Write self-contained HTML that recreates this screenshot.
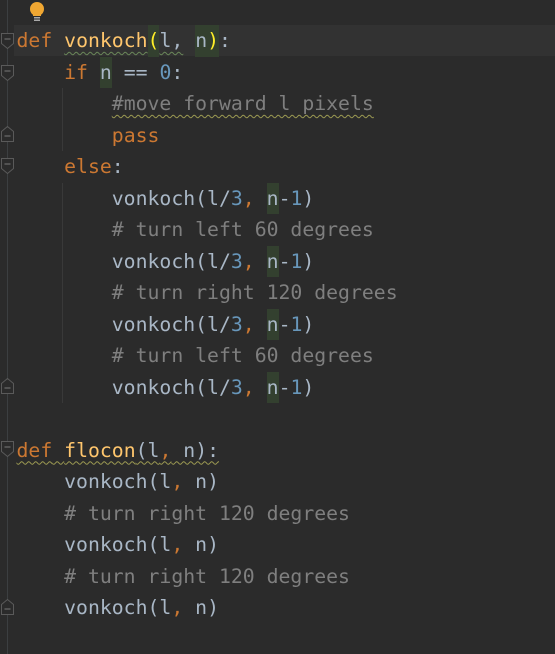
<!DOCTYPE html>
<html><head><meta charset="utf-8"><style>
html,body{margin:0;padding:0;}
body{width:555px;height:654px;background:#2b2b2b;position:relative;overflow:hidden;font-family:"DejaVu Sans Mono","Liberation Mono",monospace;font-size:19.8px;}
.cur{position:absolute;left:14px;top:25px;width:541px;height:31px;background:#323232;}
.gut{position:absolute;left:7px;top:0;width:1px;height:654px;background:#3c3f41;}
.l{position:absolute;left:16.5px;height:31.5px;line-height:31.5px;white-space:pre;color:#a9b7c6;}
.k{color:#cc7832}.f{color:#ffc66d}.n{color:#6897bb}.c{color:#7f7f7f}
.h{background:#33402f;display:inline-block;height:31.5px}
.g{position:absolute;width:1px;background:#393939;}
.w1{text-decoration:underline wavy #6a8759;text-decoration-thickness:1px;text-underline-offset:4px}
.w2{text-decoration:underline wavy #9c9a52;text-decoration-thickness:1px;text-underline-offset:4px}
.fm{position:absolute;left:0px;}
</style></head><body>
<div class="cur"></div>
<div class="gut"></div>
<div class="g" style="left:62px;top:88px;height:63px"></div>
<div class="g" style="left:62px;top:183px;height:220px"></div>
<svg style="position:absolute;left:28px;top:1px" width="18" height="22" viewBox="0 0 18 22"><circle cx="9" cy="8" r="7" fill="#f0a732"/><rect x="5" y="12" width="8" height="3" fill="#f0a732"/><rect x="6" y="16" width="6" height="1.5" fill="#aaa"/><rect x="6" y="18.5" width="6" height="1.5" fill="#aaa"/></svg>
<svg class="fm" style="top:32px" width="16" height="18"><path d="M1.5 1.5h12v10l-6 5l-6-5z" fill="#2b2b2b" stroke="#5a5a5a"/><path d="M4.5 7h6" stroke="#7a7a7a"/></svg>
<svg class="fm" style="top:64px" width="16" height="18"><path d="M1.5 1.5h12v10l-6 5l-6-5z" fill="#2b2b2b" stroke="#5a5a5a"/><path d="M4.5 7h6" stroke="#7a7a7a"/></svg>
<svg class="fm" style="top:125px" width="16" height="18"><path d="M1.5 16.5h12v-10l-6-5l-6 5z" fill="#2b2b2b" stroke="#5a5a5a"/><path d="M4.5 11h6" stroke="#7a7a7a"/></svg>
<svg class="fm" style="top:157px" width="16" height="18"><path d="M1.5 1.5h12v10l-6 5l-6-5z" fill="#2b2b2b" stroke="#5a5a5a"/><path d="M4.5 7h6" stroke="#7a7a7a"/></svg>
<svg class="fm" style="top:377px" width="16" height="18"><path d="M1.5 16.5h12v-10l-6-5l-6 5z" fill="#2b2b2b" stroke="#5a5a5a"/><path d="M4.5 11h6" stroke="#7a7a7a"/></svg>
<svg class="fm" style="top:440px" width="16" height="18"><path d="M1.5 1.5h12v10l-6 5l-6-5z" fill="#2b2b2b" stroke="#5a5a5a"/><path d="M4.5 7h6" stroke="#7a7a7a"/></svg>
<svg class="fm" style="top:598px" width="16" height="18"><path d="M1.5 16.5h12v-10l-6-5l-6 5z" fill="#2b2b2b" stroke="#5a5a5a"/><path d="M4.5 11h6" stroke="#7a7a7a"/></svg>

<div class="l" style="top:25px"><span class="k">def</span> <span class="f w1">vonkoch</span><span class="h" style="color:#ffef28">(</span><span class="w1">l,</span> <span class="h">n<span style="display:inline-block;width:2px;height:20px;background:#bbb;vertical-align:-3px;margin-right:-2px"></span></span><span class="h" style="color:#ffef28">)</span>:</div>
<div class="l" style="top:56.5px">    <span class="k">if</span> <span class="h">n</span> == <span class="n">0</span>:</div>
<div class="l" style="top:88px">        <span class="c w2">#move forward l pixels</span></div>
<div class="l" style="top:119.5px">        <span class="k">pass</span></div>
<div class="l" style="top:151px">    <span class="k">else</span>:</div>
<div class="l" style="top:182.5px">        vonkoch(l/<span class="n">3</span><span class="k">,</span> <span class="h">n</span>-<span class="n">1</span>)</div>
<div class="l" style="top:214px">        <span class="c"># turn left 60 degrees</span></div>
<div class="l" style="top:245.5px">        vonkoch(l/<span class="n">3</span><span class="k">,</span> <span class="h">n</span>-<span class="n">1</span>)</div>
<div class="l" style="top:277px">        <span class="c"># turn right 120 degrees</span></div>
<div class="l" style="top:308.5px">        vonkoch(l/<span class="n">3</span><span class="k">,</span> <span class="h">n</span>-<span class="n">1</span>)</div>
<div class="l" style="top:340px">        <span class="c"># turn left 60 degrees</span></div>
<div class="l" style="top:371.5px">        vonkoch(l/<span class="n">3</span><span class="k">,</span> <span class="h">n</span>-<span class="n">1</span>)</div>
<div class="l" style="top:434.5px"><span class="w2"><span class="k">def</span> <span class="f">flocon</span>(l<span class="k">,</span> n):</span></div>
<div class="l" style="top:466px">    vonkoch(l<span class="k">,</span> n)</div>
<div class="l" style="top:497.5px">    <span class="c"># turn right 120 degrees</span></div>
<div class="l" style="top:529px">    vonkoch(l<span class="k">,</span> n)</div>
<div class="l" style="top:560.5px">    <span class="c"># turn right 120 degrees</span></div>
<div class="l" style="top:592px">    vonkoch(l<span class="k">,</span> n)</div>
</body></html>
